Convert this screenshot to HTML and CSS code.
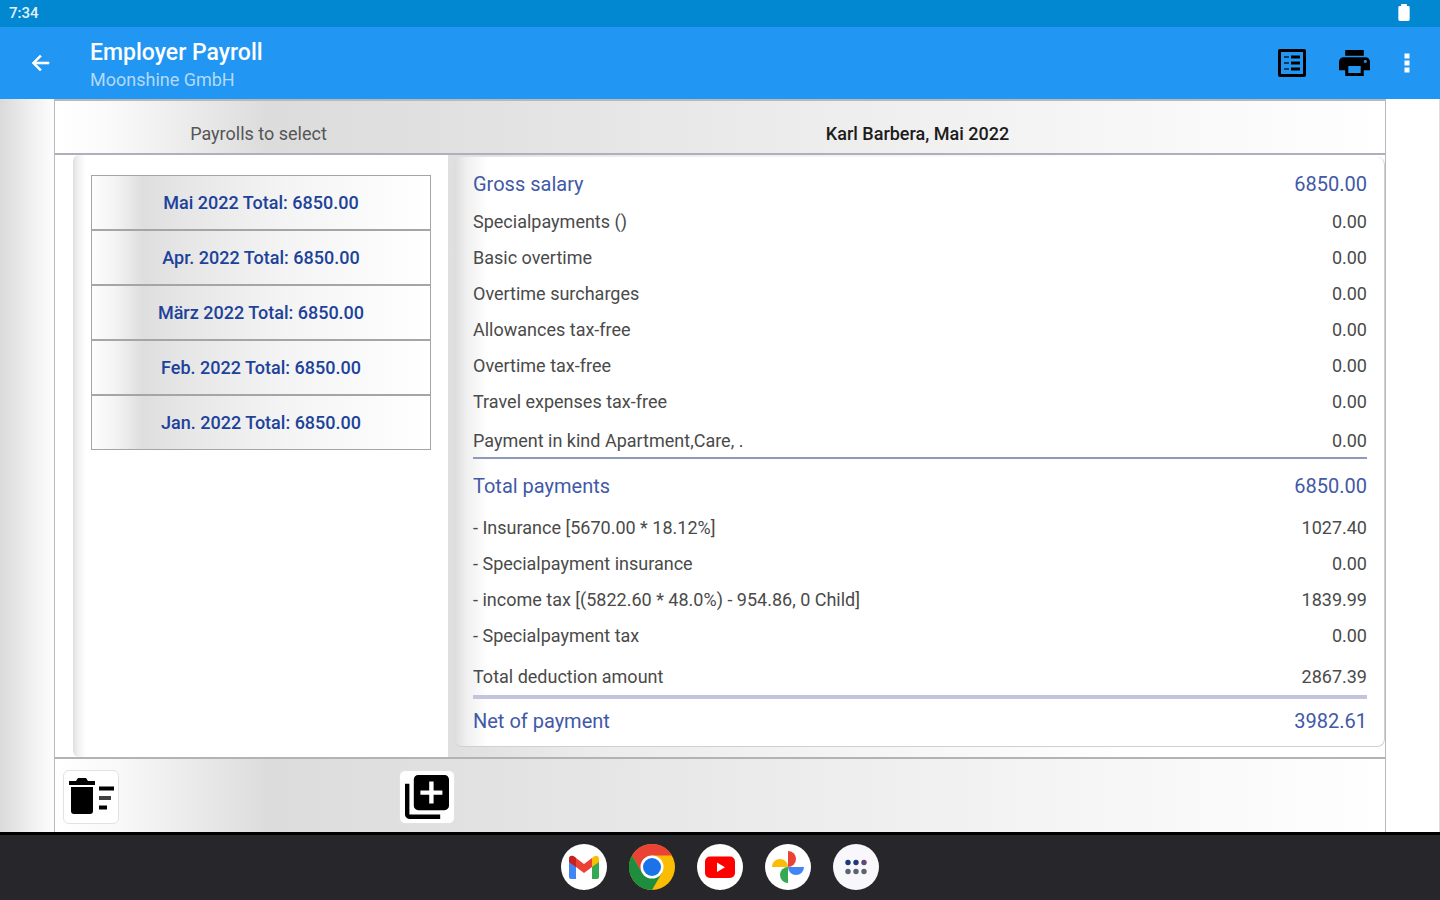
FILE: index.html
```html
<!DOCTYPE html>
<html lang="en">
<head>
<meta charset="utf-8">
<title>Employer Payroll</title>
<link rel="stylesheet" href="styles.css">
</head>
<body>
<div class="status">
  <span>7:34</span>
  <svg class="battery" viewBox="0 0 12 18" aria-hidden="true"><path d="M3 2V0h6v2h1.500q1.500 0 1.500 1.500v13q0 1.500-1.500 1.500h-9Q0 18 0 16.500v-13Q0 2 1.500 2z" fill="#fff"/></svg>
</div>
<header class="appbar">
  <button class="icon-btn back" aria-label="Back"><svg viewBox="0 0 24 24"><path d="M21 11H7.830l5.590-5.590L12 4l-8 8 8 8 1.410-1.410L7.830 13H21z" fill="#fff" stroke="#fff" stroke-width=".6"/></svg></button>
  <div class="titles">
    <h1>Employer Payroll</h1>
    <p>Moonshine GmbH</p>
  </div>
  <button class="icon-btn list" aria-label="List"><svg viewBox="0 0 28 28"><path fill-rule="evenodd" d="M2 0h24q2 0 2 2v24q0 2-2 2H2q-2 0-2-2V2Q0 0 2 0zM3 3v22h22V3z"/><path d="M13 6.500h9v3h-9zM13 12.500h9v3h-9zM13 18.500h9v3h-9z"/><path d="M6 7h5v2H6zM6 13h5v2H6zM6 19h5v2H6z" opacity=".6"/></svg></button>
  <button class="icon-btn print" aria-label="Print"><svg viewBox="2 3 20 18" preserveAspectRatio="none"><path d="M19 8H5c-1.660 0-3 1.340-3 3v6h4v4h12v-4h4v-6c0-1.660-1.340-3-3-3zm-3 11H8v-5h8v5zm3-7c-.55 0-1-.45-1-1s.45-1 1-1 1 .45 1 1-.45 1-1 1zm-1-9H6v4h12V3z"/></svg></button>
  <button class="icon-btn more" aria-label="More options"><svg viewBox="0 0 6 20"><path fill="#fff" d="M.5.500h5v5h-5zM.5 7.500h5v5h-5zM.5 14.500h5v5h-5z"/></svg></button>
</header>
<main class="stage">
  <div class="sheet">
    <div class="sheet-head">
      <h2 class="pick">Payrolls to select</h2>
      <h2 class="who">Karl Barbera, Mai 2022</h2>
    </div>
    <div class="sheet-body">
      <nav class="months">
        <div class="month-list">
          <button>Mai 2022 Total: 6850.00</button>
          <button>Apr. 2022 Total: 6850.00</button>
          <button>März 2022 Total: 6850.00</button>
          <button>Feb. 2022 Total: 6850.00</button>
          <button>Jan. 2022 Total: 6850.00</button>
        </div>
      </nav>
      <section class="detail">
        <div class="card">
          <table>
            <tbody>
              <tr class="sum gross"><th scope="row">Gross salary</th><td>6850.00</td></tr>
              <tr><th scope="row">Specialpayments ()</th><td>0.00</td></tr>
              <tr><th scope="row">Basic overtime</th><td>0.00</td></tr>
              <tr><th scope="row">Overtime surcharges</th><td>0.00</td></tr>
              <tr><th scope="row">Allowances tax-free</th><td>0.00</td></tr>
              <tr><th scope="row">Overtime tax-free</th><td>0.00</td></tr>
              <tr><th scope="row">Travel expenses tax-free</th><td>0.00</td></tr>
              <tr class="ruled"><th scope="row">Payment in kind Apartment,Care, .</th><td>0.00</td></tr>
              <tr class="sum total"><th scope="row">Total payments</th><td>6850.00</td></tr>
              <tr><th scope="row">- Insurance [5670.00 * 18.12%]</th><td>1027.40</td></tr>
              <tr><th scope="row">- Specialpayment insurance</th><td>0.00</td></tr>
              <tr><th scope="row">- income tax [(5822.60 * 48.0%) - 954.86, 0 Child]</th><td>1839.99</td></tr>
              <tr><th scope="row">- Specialpayment tax</th><td>0.00</td></tr>
              <tr class="ruled thick"><th scope="row">Total deduction amount</th><td>2867.39</td></tr>
              <tr class="sum net"><th scope="row">Net of payment</th><td>3982.61</td></tr>
            </tbody>
          </table>
        </div>
      </section>
    </div>
    <div class="sheet-foot">
      <button class="tool" aria-label="Delete payrolls"><svg viewBox="0 0 46 38"><path d="M1 3h7l2-3h8l2 3h7v4H1zM3 9h22v24q0 3-3 3H6q-3 0-3-3zM31 8.500h15v4H31zM31 27.500h8v4h-8z"/><path d="M31 18h12v4H31z" opacity=".75"/></svg></button>
      <button class="tool" aria-label="Add payroll"><svg viewBox="2 2 20 20"><path d="M4 6H2v14c0 1.100.9 2 2 2h14v-2H4V6zm16-4H8c-1.100 0-2 .9-2 2v12c0 1.100.9 2 2 2h12c1.100 0 2-.9 2-2V4c0-1.100-.9-2-2-2zm-1 9h-4v4h-2v-4H9V9h4V5h2v4h4v2z"/></svg></button>
    </div>
  </div>
</main>
<footer class="dock">
  <button aria-label="Gmail"><svg viewBox="0 0 46 46"><circle cx="23" cy="23" r="23" fill="#fff"/><path d="M8 16l7 5v14h-5q-2 0-2-2z" fill="#4285f4"/><path d="M31 21l7-5v17q0 2-2 2h-5z" fill="#34a853"/><path d="M31 14l2-1.500c2-1.500 5-.5 5 2.500v3l-7 5z" fill="#fbbc04"/><path d="M8 15c0-3 3-4 5-2.500L23 20l8-6v9l-8 6-8-6-7-5z" fill="#ea4335"/><path d="M8 15c0-3 3-4 5-2.500l2 1.500v9l-7-5z" fill="#c5221f"/></svg></button>
  <button aria-label="Chrome"><svg viewBox="0 0 46 46"><circle cx="23" cy="23" r="23" fill="#fbbc04"/><path d="M3.080 11.500A23 23 0 0 1 42.920 11.500H23L13.040 28.750z" fill="#ea4335"/><path d="M3.080 11.500A23 23 0 0 0 23 46L33 28.750H13.040z" fill="#1e8e3e"/><circle cx="23" cy="23" r="11.500" fill="#fff"/><circle cx="23" cy="23" r="9" fill="#1a73e8"/></svg></button>
  <button aria-label="YouTube"><svg viewBox="0 0 46 46"><circle cx="23" cy="23" r="23" fill="#fff"/><rect x="8" y="12.500" width="30" height="21.500" rx="5" fill="#f00"/><path d="M20 18.500v9.500l8-4.750z" fill="#fff"/></svg></button>
  <button aria-label="Photos"><svg viewBox="0 0 46 46"><circle cx="23" cy="23" r="23" fill="#fff"/><path d="M23 7a8 8 0 0 1 0 16z" fill="#ea4335"/><path d="M39 23a8 8 0 0 1-16 0z" fill="#4285f4"/><path d="M23 39a8 8 0 0 1 0-16z" fill="#34a853"/><path d="M7 23a8 8 0 0 1 16 0z" fill="#fbbc04"/></svg></button>
  <button aria-label="All apps"><svg viewBox="0 0 46 46"><circle cx="23" cy="23" r="23" fill="#f8f7fc"/><g fill="#1d3a78"><circle cx="15" cy="18.500" r="2.700"/><circle cx="23" cy="18.500" r="2.700"/></g><circle cx="31" cy="18.500" r="2.700" fill="#65476f"/><g fill="#5b6272"><circle cx="15" cy="27.500" r="2.700"/><circle cx="23" cy="27.500" r="2.700"/><circle cx="31" cy="27.500" r="2.700"/></g></svg></button>
</footer>
</body>
</html>
```
FILE: styles.css
```css
* { box-sizing: border-box; }

body {
  margin: 0;
  min-height: 100vh;
  display: flex;
  flex-direction: column;
  font-family: Roboto, "Liberation Sans", sans-serif;
  font-size: 18px;
  color: #4a4a4a;
  background: #fff;
}

h1, h2, p { margin: 0; }

button {
  margin: 0;
  padding: 0;
  border: 0;
  background: none;
  font: inherit;
  cursor: pointer;
}

svg { display: block; width: 100%; height: 100%; }

.status {
  height: 27px;
  padding: 0 30px 2px 9px;
  display: flex;
  align-items: center;
  justify-content: space-between;
  background: #0288d1;
  color: #e3f2fb;
  font-size: 15px;
  font-weight: 500;
}

.battery { width: 12px; height: 17px; }

.appbar {
  height: 72px;
  padding: 0 30px 0 28px;
  display: flex;
  align-items: center;
  background: #2196f3;
}

.titles { flex: 1; margin-left: 38px; padding-top: 6px; }

.titles h1 {
  font-size: 23px;
  line-height: 28px;
  font-weight: 500;
  color: #fff;
}

.titles p {
  font-size: 18px;
  line-height: 26px;
  color: #b3dafb;
}

.back { width: 24px; height: 24px; }
.list { width: 28px; height: 28px; }
.print { width: 31px; height: 26px; margin-left: 33px; }
.more { width: 6px; height: 20px; margin-left: 34px; }

.stage {
  flex: 1;
  display: flex;
  padding: 0 53px 0 54px;
  background: linear-gradient(90deg, #dadada 0, #f0f0f0 32px, #fdfdfd 54px, #fff 60px);
  border-right: 1px solid #ddd;
}

.sheet {
  flex: 1;
  display: flex;
  flex-direction: column;
  background: #fff;
  border: solid #b9b9bc;
  border-width: 2px 1px 0;
}

.sheet-head {
  height: 54px;
  display: flex;
  align-items: center;
  padding-top: 13px;
  border-bottom: 2px solid #b0aebf;
  background: linear-gradient(90deg, #fff 0, #fafafa 4%, #dcdcdc 16%, #e0e0e0 28%, #eee 60%, #fff 100%);
}

.sheet-head h2 {
  font-size: 18px;
  line-height: 24px;
  text-align: center;
}

.pick { width: 407px; font-weight: 400; color: #555; }
.who { flex: 1; padding-right: 12px; font-weight: 500; color: #1c1c1c; }

.sheet-body { flex: 1; display: flex; }

.months {
  width: 375px;
  margin-left: 18px;
  padding: 20px 17px 0 18px;
  background: linear-gradient(90deg, #e0e0e0 0, #f3f3f3 6px, #fff 13px);
  border-radius: 6px;
}

.month-list {
  display: flex;
  flex-direction: column;
  gap: 2px;
  padding: 1px;
  background: #a5a5a5;
}

.month-list button {
  height: 53px;
  font-size: 18px;
  font-weight: 500;
  color: #1c429a;
  background: linear-gradient(90deg, #fdfdfd 0, #f3f3f3 7%, #dedede 15%, #e6e6e6 27%, #f4f4f4 57%, #fff 100%);
}

.detail {
  flex: 1;
  display: flex;
  padding: 2px 0 10px 6px;
  background: linear-gradient(90deg, #dfdfdf 0, #ebebeb 15%, #fff 75%);
}

.card {
  flex: 1;
  padding: 9px 17px 0 19px;
  border: 1px solid #d0d0d0;
  border-width: 0 1px 1px 0;
  border-radius: 8px;
  background: linear-gradient(90deg, #dcdcdc 0, #efefef 12px, #fff 34px);
}

table { width: 100%; border-collapse: collapse; }

th, td { height: 36px; padding: 0; font-weight: 400; line-height: 24px; }
th { text-align: left; }
td { text-align: right; }

.sum th, .sum td { font-size: 20px; color: #4159a6; }
.gross th, .gross td { height: 38px; padding-bottom: 2px; }
.ruled th, .ruled td { height: 38px; padding-top: 4px; border-bottom: 2px solid #8f98bd; }
.total th, .total td { height: 52px; padding-top: 2px; }
.thick th, .thick td { height: 43px; padding-top: 4px; border-bottom: 4px solid #c2c5db; }
.net th, .net td { height: 46px; }

.sheet-foot {
  height: 75px;
  display: flex;
  align-items: flex-start;
  justify-content: flex-start;
  gap: 280px;
  padding: 11px 8px;
  border-top: 2px solid #b3b3b3;
  background: linear-gradient(90deg, #fff 0, #f8f8f8 5%, #dcdcdc 16%, #e0e0e0 28%, #eee 60%, #fff 100%);
}

.tool {
  width: 56px;
  height: 54px;
  padding: 4px;
  border: 1px solid #e2e2e2;
  border-radius: 6px;
  background: #fff;
}

.dock {
  height: 68px;
  padding-bottom: 2px;
  display: flex;
  align-items: center;
  justify-content: center;
  gap: 22px;
  border-top: 3px solid #000;
  background: #26262b;
}

.dock button { width: 46px; height: 46px; border-radius: 50%; }
```
